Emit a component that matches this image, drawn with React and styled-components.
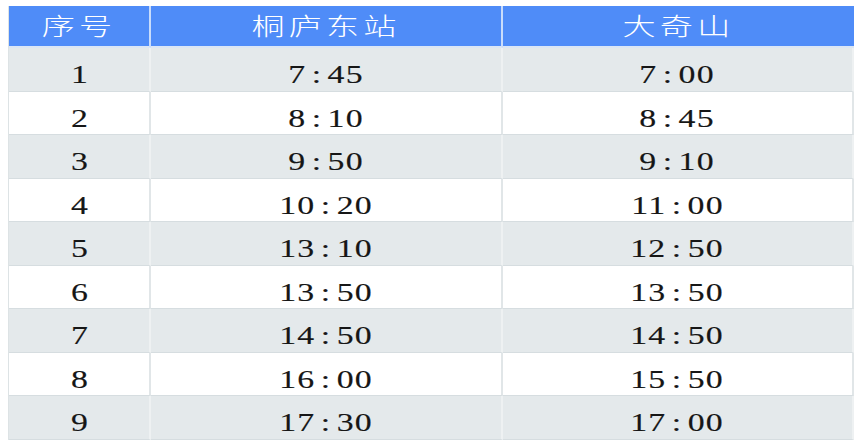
import styled, { createGlobalStyle } from "styled-components";

const GlobalStyle = createGlobalStyle`
    html, body{
        margin: 0;
        padding: 0;
        background: #ffffff;
    }
`;

const Page = styled.div`
    width: 864px;
    height: 444px;
    box-sizing: border-box;
    padding: 6px 11px 0 8px;
    background: #ffffff;
`;

const Table = styled.div`
    display: grid;
    grid-template-columns: 142px 352px 351px;
    grid-template-rows: 42px repeat(9, 43.5px);
    border-left: 1px solid #dde3e5;
`;

const HeadCell = styled.div`
    background: #4f8cf8;
    color: #ffffff;
    display: flex;
    align-items: flex-start;
    justify-content: center;
    padding-top: 5px;
    box-sizing: border-box;
    border-right: ${p => (p.$last ? "none" : "2px solid #c9dcfb")};
    border-bottom: 2px solid #dbe6f5;
    font-family: "Noto Sans CJK SC", sans-serif;
    font-weight: 300;
    font-size: 24px;
    line-height: 28px;
`;

const Cell = styled.div`
    background: ${p => (p.$alt ? "#e4e9eb" : "#ffffff")};
    color: #161616;
    display: flex;
    align-items: center;
    justify-content: center;
    padding-top: 12px;
    box-sizing: border-box;
    border-right: 2px solid ${p => (p.$alt ? "#eef1f2" : "#e1e6e8")};
    border-bottom: 1px solid #d6dde0;
    font-family: "Liberation Serif", serif;
    font-size: 26px;
    line-height: 26px;
    -webkit-text-stroke: 0.15px #161616;
`;

const Stretch = styled.span`
    display: inline-block;
    transform: scaleX(${p => p.$scale || 1.3});
    letter-spacing: ${p => p.$spacing || "0px"};
    white-space: nowrap;
`;

const Colon = styled.span`
    margin: 0 4px;
`;

const rows = [
    ["1", "7:45", "7:00"],
    ["2", "8:10", "8:45"],
    ["3", "9:50", "9:10"],
    ["4", "10:20", "11:00"],
    ["5", "13:10", "12:50"],
    ["6", "13:50", "13:50"],
    ["7", "14:50", "14:50"],
    ["8", "16:00", "15:50"],
    ["9", "17:30", "17:00"],
];

function Time({ value }){
    const [h, m] = value.split(":");
    if (m === undefined) return <Stretch>{value}</Stretch>;
    return <Stretch $spacing="1px">{h}<Colon>:</Colon>{m}</Stretch>;
}

export default function App(){
    return (
        <Page>
            <GlobalStyle />
            <Table>
                <HeadCell><Stretch $scale={1.38} $spacing="3px">序号</Stretch></HeadCell>
                <HeadCell><Stretch $scale={1.38} $spacing="3px">桐庐东站</Stretch></HeadCell>
                <HeadCell $last><Stretch $scale={1.38} $spacing="3px">大奇山</Stretch></HeadCell>
                {rows.map((r, i) => (
                    r.map((v, j) => (
                        <Cell key={i + "-" + j} $alt={i % 2 === 0}>
                            <Time value={v} />
                        </Cell>
                    ))
                ))}
            </Table>
        </Page>
    )
}
